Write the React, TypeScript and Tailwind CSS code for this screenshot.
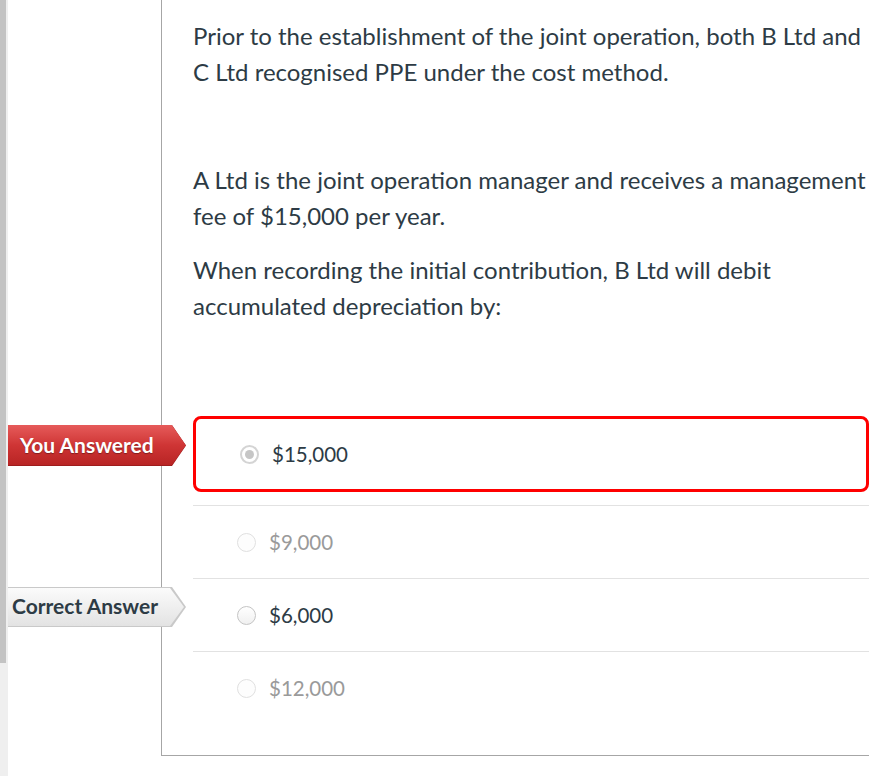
import React from 'react';

type Answer = { text: string; faded?: boolean; selected?: boolean; badge?: 'you' | 'correct' };

const answers: Answer[] = [
  { text: '$15,000', selected: true, badge: 'you' },
  { text: '$9,000', faded: true },
  { text: '$6,000', badge: 'correct' },
  { text: '$12,000', faded: true },
];

function Radio({ selected, faded }: { selected?: boolean; faded?: boolean }) {
  if (selected) {
    return (
      <span className="flex h-[19px] w-[19px] shrink-0 items-center justify-center rounded-full border-2 border-[#d4d4d4] bg-white">
        <span className="h-[9px] w-[9px] rounded-full bg-[#c6c6c6]" />
      </span>
    );
  }
  return (
    <span
      className={
        faded
          ? 'h-[19px] w-[19px] shrink-0 rounded-full border border-[#e0e0e0] bg-[#fdfdfd]'
          : 'h-[19px] w-[19px] shrink-0 rounded-full border border-[#c4c4c4] bg-gradient-to-b from-white to-[#f0f0f0]'
      }
    />
  );
}

function YouAnswered() {
  return (
    <div className="absolute left-[-185px] top-[9px] h-[41px] w-[178px] bg-[#9e1c1c] [clip-path:polygon(0_0,calc(100%-14px)_0,100%_50%,calc(100%-14px)_100%,0_100%)]">
      <div className="flex h-[40px] items-center bg-gradient-to-b from-[#e65a5a] via-[#cf3535] to-[#b82424] pl-3 text-[21px] font-bold text-white [clip-path:polygon(0_0,calc(100%-14px)_0,100%_50%,calc(100%-14px)_100%,0_100%)] [text-shadow:0_1px_1px_rgba(0,0,0,0.35)]">
        You Answered
      </div>
    </div>
  );
}

function CorrectAnswer() {
  return (
    <div className="absolute left-[-185px] top-[8px] h-[40px] w-[178px] bg-[#c9c9c9] [clip-path:polygon(0_0,calc(100%-14px)_0,100%_50%,calc(100%-14px)_100%,0_100%)]">
      <div className="mt-px flex h-[38px] w-[176px] items-center bg-gradient-to-b from-[#fbfbfb] to-[#e3e3e3] pb-[2px] pl-1 text-[21px] font-bold text-[#2d3b45] [clip-path:polygon(0_0,calc(100%-14px)_0,100%_50%,calc(100%-14px)_100%,0_100%)]">
        Correct Answer
      </div>
    </div>
  );
}

export default function App() {
  return (
    <div className="flex min-h-screen bg-white font-['Lato','Noto_Sans',sans-serif] text-[#2d3b45]">
      <div className="flex w-2 shrink-0 flex-col bg-[#efefef]">
        <div className="h-[663px] w-[6px] bg-[#c3c3c3]" />
      </div>
      <div className="w-[153px] shrink-0" />
      <div className="flex h-[756px] flex-1 flex-col border-b border-l border-[#a6a6a6] pb-[31px] pl-[31px] pt-[18px]">
        <div className="text-[24px] leading-[36px]">
          <p className="mb-[18px]">
            Prior to the establishment of the joint operation, both B Ltd and C Ltd recognised PPE under the cost method.
          </p>
          <p className="mb-[18px]">&nbsp;</p>
          <p className="mb-[18px]">
            A Ltd is the joint operation manager and receives a management fee of $15,000 per year.
          </p>
          <p>When recording the initial contribution, B Ltd will debit accumulated depreciation by:</p>
        </div>

        <div className="mt-auto">
          {answers.map((a, i) =>
            a.selected ? (
              <div key={i} className="relative border-b border-[#e2e2e2] pb-[13px]">
                {a.badge === 'you' && <YouAnswered />}
                <div className="flex h-[76px] items-center gap-[13px] rounded-[8px] border-[3px] border-[#ff0000] pl-11">
                  <Radio selected />
                  <span className="text-[20.5px]">{a.text}</span>
                </div>
              </div>
            ) : (
              <div
                key={i}
                className={
                  i < answers.length - 1
                    ? 'relative flex h-[73px] items-center gap-[13px] border-b border-[#e2e2e2] pl-11'
                    : 'relative flex h-[72px] items-center gap-[13px] pl-11'
                }
              >
                {a.badge === 'correct' && <CorrectAnswer />}
                <Radio faded={a.faded} />
                <span className={a.faded ? 'text-[20.5px] text-[#9a9a9a]' : 'text-[20.5px]'}>{a.text}</span>
              </div>
            )
          )}
        </div>
      </div>
    </div>
  );
}
